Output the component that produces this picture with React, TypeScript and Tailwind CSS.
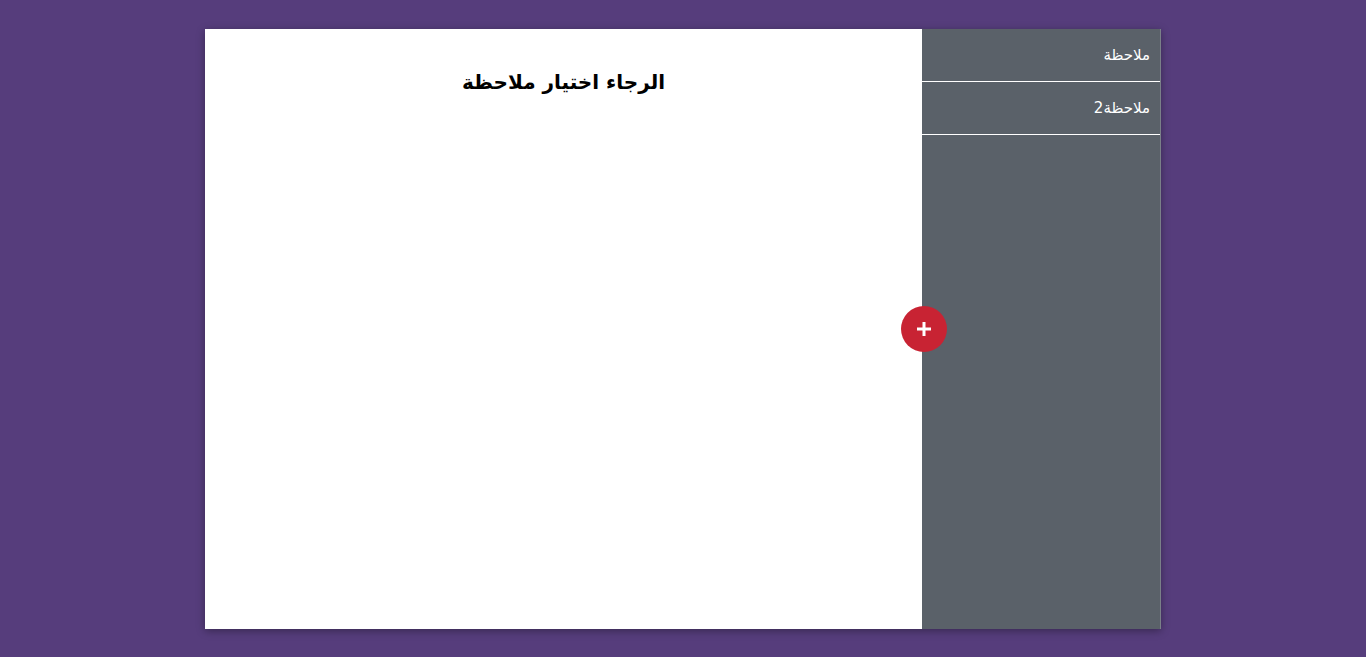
const notes = ["ملاحظة", "ملاحظة2"];

export default function App() {
  return (
    <div
      className="min-h-[657px] w-full bg-[#563d7c] pt-[29px]"
      style={{ fontFamily: '"DejaVu Sans", "Noto Sans", sans-serif' }}
    >
      <div className="relative mx-auto flex h-[600px] w-[956px] shadow-[0_2px_8px_rgba(0,0,0,0.35)]">
        {/* Main area */}
        <div className="flex w-[717px] flex-col items-center bg-white pt-[39px]">
          <h1 dir="rtl" className="text-[20px] font-bold leading-[28px] text-black">
            الرجاء اختيار ملاحظة
          </h1>
        </div>

        {/* Sidebar */}
        <div className="flex flex-1 flex-col border-r border-[#7a8088] bg-[#5a6169]">
          {notes.map((n) => (
            <div
              key={n}
              dir="rtl"
              className="h-[53px] border-b border-white px-[10px] pt-[15px] text-[15px] leading-[22px] text-white"
            >
              {n}
            </div>
          ))}
        </div>

        {/* Add button */}
        <button className="absolute left-[696px] top-[277px] flex h-[46px] w-[46px] items-center justify-center rounded-full bg-[#c82333] text-white">
          <svg width="16" height="16" viewBox="0 0 16 16">
            <path d="M8 1v14M1 8h14" stroke="white" strokeWidth="3" />
          </svg>
        </button>
      </div>
    </div>
  );
}
